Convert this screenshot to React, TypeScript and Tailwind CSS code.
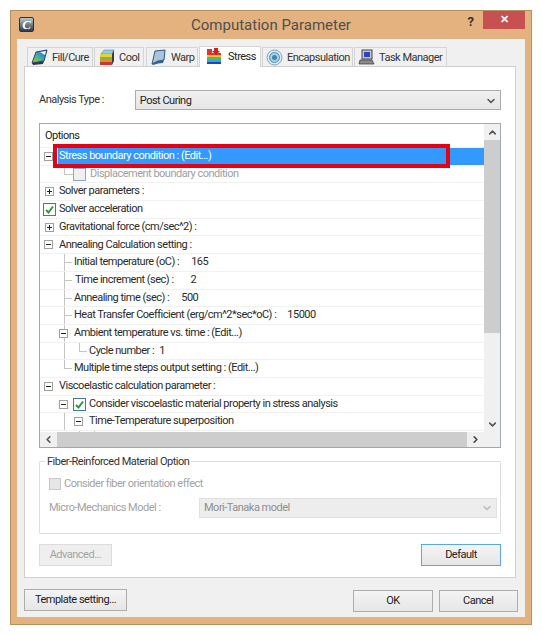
import React from "react"
import { ChevronDown, ChevronLeft, ChevronRight, ChevronUp } from "lucide-react"

const FONT = "font-['Roboto','Liberation_Sans',sans-serif]"

const FillIcon = () => (
  <svg width="17" height="17" viewBox="0 0 17 17" className="shrink-0">
    <defs>
      <linearGradient id="fill" x1="0" y1="1" x2="1" y2="0">
        <stop offset="0" stopColor="#e8a030" />
        <stop offset="0.3" stopColor="#60c060" />
        <stop offset="0.65" stopColor="#2f8fd8" />
        <stop offset="1" stopColor="#1f4fa8" />
      </linearGradient>
    </defs>
    <path d="M1 14 L5 3 L16 1 L13 12 Z" fill="url(#fill)" stroke="#24466e" />
    <path d="M9 3 L15 2 L14 6 Z" fill="#f4f8fb" />
    <path d="M1 14 L13 12 L12 15 L2 16 Z" fill="#2b3a4d" />
  </svg>
)

const CoolIcon = () => (
  <svg width="17" height="17" viewBox="0 0 17 17" className="shrink-0">
    <path d="M3 5 L6 1 L16 1 L14 5 Z" fill="#8fd0e8" stroke="#4b7a96" strokeWidth="0.5" />
    <rect x="2" y="5" width="12" height="3" fill="#e8d03a" />
    <rect x="2" y="8" width="12" height="3" fill="#7ab84a" />
    <rect x="2" y="11" width="12" height="2" fill="#e8892e" />
    <rect x="2" y="13" width="12" height="3" fill="#c9382a" />
    <path d="M14 5 L16 1 L16 12 L14 16 Z" fill="#3d3d3d" />
  </svg>
)

const WarpIcon = () => (
  <svg width="17" height="17" viewBox="0 0 17 17" className="shrink-0">
    <path d="M5 2 L15 1 L14 11 Q8 11 2 15 Z" fill="#a9c4de" stroke="#34597f" />
    <path d="M2 15 Q8 11 14 11 L13 14 Q8 14 3 16 Z" fill="#35608c" />
  </svg>
)

const StressIcon = () => (
  <svg width="17" height="17" viewBox="0 0 17 17" className="shrink-0">
    <rect x="1" y="1" width="5" height="4" fill="#e8302a" />
    <rect x="1" y="5" width="14" height="2" fill="#e8302a" />
    <rect x="1" y="7" width="14" height="2" fill="#f2c230" />
    <rect x="1" y="9" width="14" height="3" fill="#4ec04a" />
    <rect x="1" y="12" width="14" height="2" fill="#3aa0e8" />
    <rect x="1" y="14" width="14" height="2" fill="#2a3fc0" />
    <path d="M8 0 L12 0 L12 3 L14 3 L10 7 L6 3 L8 3 Z" fill="#d3201c" />
  </svg>
)

const EncapIcon = () => (
  <svg width="17" height="17" viewBox="0 0 17 17" className="shrink-0">
    <circle cx="8.5" cy="8.5" r="7.5" fill="#dcebf3" stroke="#7da8bf" />
    <circle cx="8.5" cy="8.5" r="5" fill="#a6d0e4" stroke="#5a8fab" />
    <circle cx="8.5" cy="8.5" r="2.5" fill="#3f86b4" />
  </svg>
)

const TaskIcon = () => (
  <svg width="17" height="17" viewBox="0 0 17 17" className="shrink-0">
    <rect x="4" y="1" width="10" height="9" fill="#c8c8c8" stroke="#444" />
    <rect x="6" y="3" width="6" height="5" fill="#2a43c8" />
    <path d="M2 11 L14 11 L16 15 L1 15 Z" fill="#8a8a8a" stroke="#333" strokeWidth="0.7" />
  </svg>
)

const AppIcon = () => (
  <div className="w-[15px] h-[15px] rounded-[2px] bg-gradient-to-b from-[#b9c6cf] to-[#2f3f4b] border border-[#26333d] flex items-center justify-center text-[13px] leading-none font-bold italic text-white font-['Liberation_Serif',serif]">
    C
  </div>
)

const Tab: React.FC<{ icon: React.ReactNode; label: string; className: string; active?: boolean }> = ({ icon, label, className, active }) => (
  <div
    className={
      active
        ? `${className} h-[21px] -mb-px z-10 bg-white border border-b-0 border-[#d5d5d5] flex items-center gap-[5px] pl-[6px] pb-[2px] text-[#222]`
        : `${className} h-[19px] bg-[#f0f0f0] border border-b-0 border-[#d5d5d5] flex items-center gap-[4px] pl-[3px] text-[#333]`
    }
  >
    {icon}
    <span className="whitespace-nowrap pt-[2px]">{label}</span>
  </div>
)

const TreeBox: React.FC<{ open?: boolean; className: string }> = ({ open, className }) => (
  <div className={`${className} absolute top-[4px] w-[9px] h-[9px] bg-white border border-[#a0a0a0] flex items-center justify-center`}>
    <div className="relative w-[5px] h-px bg-[#222]">
      {!open && <div className="absolute left-[2px] top-[-2px] w-px h-[5px] bg-[#222]" />}
    </div>
  </div>
)

const Check: React.FC<{ checked?: boolean; className: string; muted?: boolean }> = ({ checked, className, muted }) => (
  <div
    className={`${className} absolute top-[2px] w-[13px] h-[13px] border flex items-center justify-center ${
      muted ? "border-[#8fa6c0] bg-[#f0f0f0]" : "border-[#3d7aa8] bg-white"
    }`}
  >
    {checked && (
      <svg width="11" height="11" viewBox="0 0 11 11">
        <path d="M2 6 L4.5 8.5 L9 2.5" fill="none" stroke="#2f9a3a" strokeWidth="2" />
      </svg>
    )}
  </div>
)

const Row: React.FC<{ className: string; muted?: boolean; value?: string; valueClass?: string; label: string; children?: React.ReactNode }> = ({
  className,
  muted,
  value,
  valueClass,
  label,
  children,
}) => (
  <div className={`${className} relative h-[17.7px] shrink-0 flex items-center border-b border-[#f2f2f2] whitespace-nowrap ${muted ? "text-[#a0a0a0]" : "text-[#2a2a2a]"}`}>
    {children}
    <span>{label}</span>
    {value && <span className={valueClass}>{value}</span>}
  </div>
)

const VLine: React.FC<{ className: string }> = ({ className }) => <div className={`${className} absolute w-px bg-[#c4c4c4]`} />
const HLine: React.FC<{ className: string }> = ({ className }) => <div className={`${className} absolute top-[8px] h-px bg-[#c4c4c4]`} />

const Button: React.FC<{ label: string; className: string; disabled?: boolean; focused?: boolean }> = ({ label, className, disabled, focused }) => (
  <div
    className={`${className} h-[22px] flex items-center justify-center border pt-px ${
      disabled
        ? "border-[#dcdcdc] bg-[#efefef] text-[#a3a3a3]"
        : focused
          ? "border-[#5ba7e6] bg-gradient-to-b from-[#f4f4f4] to-[#e6e6e6] text-[#222]"
          : "border-[#adadad] bg-gradient-to-b from-[#f4f4f4] to-[#e6e6e6] text-[#222]"
    }`}
  >
    {label}
  </div>
)

export default function App() {
  return (
    <div className={`${FONT} w-[542px] h-[634px] bg-white pt-[10px] pl-[10px] text-[11px] tracking-[-0.5px] overflow-hidden`}>
      <div className="w-[522px] h-[615px] bg-[#e3b27f] border border-[#b8915f] flex flex-col">
        {/* title bar */}
        <div className="relative h-[28px] shrink-0 flex items-center justify-center text-[15px] tracking-normal text-[#4f4f4f]">
          <div className="absolute left-[8px] top-[6px]">
            <AppIcon />
          </div>
          <span>Computation Parameter</span>
          <div className="absolute right-[57px] top-px text-[13px] font-bold text-[#333]">?</div>
          <div className="absolute right-[6px] top-0 w-[42px] h-[18px] bg-[#c75050] flex items-center justify-center text-white text-[11px] font-bold">✕</div>
        </div>

        {/* dialog body */}
        <div className="mx-[6px] w-[508px] h-[578px] bg-[#f0f0f0] px-[7px] pt-[5px] flex flex-col border-t border-[#f7f7f7]">
          <div className="flex items-end h-[21px] pl-[3px] gap-px">
            <Tab icon={<FillIcon />} label="Fill/Cure" className="w-[66px]" />
            <Tab icon={<CoolIcon />} label="Cool" className="w-[50px]" />
            <Tab icon={<WarpIcon />} label="Warp" className="w-[52px] ml-px" />
            <Tab icon={<StressIcon />} label="Stress" active className="w-[62px]" />
            <Tab icon={<EncapIcon />} label="Encapsulation" className="w-[91px]" />
            <Tab icon={<TaskIcon />} label="Task Manager" className="w-[93px]" />
          </div>

          {/* tab page */}
          <div className="w-[492px] h-[512px] bg-white border border-[#d0d0d0] px-[14px] flex flex-col">
            <div className="flex items-center mt-[23px] h-[20px]">
              <span className="w-[96px] text-[#333]">Analysis Type :</span>
              <div className="w-[367px] h-[20px] border border-[#acacac] bg-gradient-to-b from-[#f0f0f0] to-[#e6e6e6] flex items-center justify-between pl-[4px] pr-[3px] pt-[2px] text-[#222]">
                <span>Post Curing</span>
                <ChevronDown size={12} strokeWidth={3} className="text-[#555]" />
              </div>
            </div>

            {/* options tree */}
            <div className="relative mt-[13px] w-[462px] h-[325px] border border-[#9fa8b0] bg-white flex flex-col shrink-0">
              <div className="flex h-[308px]">
                <div className="w-[444px] overflow-hidden flex flex-col">
                  <div className="h-[24px] shrink-0 flex items-center pl-[5px] pt-[1px] text-[#222] border-b border-[#f2f2f2]">Options</div>
                  <Row className="pl-[19px]" label="">
                    <TreeBox open className="left-[4px]" />
                    <div className="absolute left-[18px] right-0 top-0 bottom-0 bg-[#3399ff] text-white flex items-center pl-[1px]">Stress boundary condition : (Edit...)</div>
                  </Row>
                  <Row className="pl-[50px]" muted label="Displacement boundary condition">
                    <VLine className="left-[24px] top-0 h-[9px]" />
                    <HLine className="left-[24px] w-[9px]" />
                    <Check muted className="left-[33px]" />
                  </Row>
                  <Row className="pl-[19px]" label="Solver parameters :">
                    <TreeBox className="left-[5px]" />
                  </Row>
                  <Row className="pl-[19px]" label="Solver acceleration">
                    <Check checked className="left-[3px]" />
                  </Row>
                  <Row className="pl-[19px]" label="Gravitational force (cm/sec^2) :">
                    <TreeBox className="left-[5px]" />
                  </Row>
                  <Row className="pl-[19px]" label="Annealing Calculation setting :">
                    <TreeBox open className="left-[4px]" />
                  </Row>
                  <Row className="pl-[34px]" label="Initial temperature (oC) :" value="165" valueClass="ml-[12px]">
                    <VLine className="left-[24px] top-0 h-full" />
                    <HLine className="left-[24px] w-[8px]" />
                  </Row>
                  <Row className="pl-[35px]" label="Time increment (sec) :" value="2" valueClass="ml-[17px]">
                    <VLine className="left-[24px] top-0 h-full" />
                    <HLine className="left-[24px] w-[8px]" />
                  </Row>
                  <Row className="pl-[34px]" label="Annealing time (sec) :" value="500" valueClass="ml-[12px]">
                    <VLine className="left-[24px] top-0 h-full" />
                    <HLine className="left-[24px] w-[8px]" />
                  </Row>
                  <Row className="pl-[34px]" label="Heat Transfer Coefficient (erg/cm^2*sec*oC) :" value="15000" valueClass="ml-[11px]">
                    <VLine className="left-[24px] top-0 h-full" />
                    <HLine className="left-[24px] w-[8px]" />
                  </Row>
                  <Row className="pl-[34px]" label="Ambient temperature vs. time : (Edit...)">
                    <VLine className="left-[24px] top-0 h-full" />
                    <TreeBox open className="left-[19px]" />
                  </Row>
                  <Row className="pl-[49px]" label="Cycle number :" value="1" valueClass="ml-[5px]">
                    <VLine className="left-[24px] top-0 h-full" />
                    <VLine className="left-[39px] top-0 h-[9px]" />
                    <HLine className="left-[39px] w-[8px]" />
                  </Row>
                  <Row className="pl-[34px]" label="Multiple time steps output setting : (Edit...)">
                    <VLine className="left-[24px] top-0 h-[9px]" />
                    <HLine className="left-[24px] w-[8px]" />
                  </Row>
                  <Row className="pl-[19px]" label="Viscoelastic calculation parameter :">
                    <TreeBox open className="left-[4px]" />
                  </Row>
                  <Row className="pl-[49px]" label="Consider viscoelastic material property in stress analysis">
                    <TreeBox open className="left-[19px]" />
                    <Check checked className="left-[33px]" />
                  </Row>
                  <Row className="pl-[49px]" label="Time-Temperature superposition">
                    <VLine className="left-[24px] top-0 h-full" />
                    <TreeBox open className="left-[34px]" />
                  </Row>
                  <div className="relative flex-1">
                    <VLine className="left-[39px] top-0 h-full" />
                    <VLine className="left-[54px] top-0 h-[2px]" />
                  </div>
                </div>
                <div className="w-[16px] bg-[#f0f0f0] flex flex-col items-center">
                  <div className="h-[16px] shrink-0 flex items-center justify-center">
                    <ChevronUp size={11} strokeWidth={3.5} className="text-[#555]" />
                  </div>
                  <div className="w-full h-[193px] bg-[#cdcdcd]" />
                  <div className="flex-1" />
                  <div className="h-[16px] shrink-0 flex items-center justify-center">
                    <ChevronDown size={11} strokeWidth={3.5} className="text-[#555]" />
                  </div>
                </div>
              </div>
              <div className="flex-1 bg-[#f0f0f0] flex items-center">
                <div className="w-[17px] flex justify-center">
                  <ChevronLeft size={11} strokeWidth={3.5} className="text-[#555]" />
                </div>
                <div className="w-[410px] h-full bg-[#cdcdcd]" />
                <div className="w-[17px] flex justify-center">
                  <ChevronRight size={11} strokeWidth={3.5} className="text-[#444]" />
                </div>
              </div>

              {/* red annotation drawn over the dialog */}
              <div className="absolute left-[13px] top-[20px] w-[397px] h-[24px] border-[4px] border-[#e60012]" />
            </div>

            {/* fiber group */}
            <div className="relative mt-[13px] w-[462px] h-[73px] border border-[#dedede] rounded-[1px]">
              <span className="absolute left-[5px] top-[-8px] bg-white px-[2px] text-[#333]">Fiber-Reinforced Material Option</span>
              <div className="flex items-center gap-[3px] h-[13px] mt-[15px] ml-[9px] text-[#a3a3a3]">
                <div className="w-[12px] h-[12px] bg-[#e6e6e6] border border-[#c8c8c8]" />
                <span className="pt-[2px]">Consider fiber orientation effect</span>
              </div>
              <div className="flex items-center mt-[8px] ml-[9px] text-[#a3a3a3]">
                <span className="w-[150px]">Micro-Mechanics Model :</span>
                <div className="w-[298px] h-[20px] bg-[#ededed] border border-[#e0e0e0] flex items-center justify-between pl-[4px] pr-[3px] text-[#8f8f8f]">
                  <span>Mori-Tanaka model</span>
                  <ChevronDown size={12} strokeWidth={3} className="text-[#bbb]" />
                </div>
              </div>
            </div>

            <div className="flex justify-between mt-[10px] w-[462px]">
              <Button label="Advanced..." disabled className="w-[73px]" />
              <Button label="Default" focused className="w-[80px]" />
            </div>
          </div>

          {/* footer */}
          <div className="flex items-start mt-[11px]">
            <Button label="Template setting..." className="w-[104px]" />
            <Button label="OK" className="w-[80px] ml-[226px] mt-px" />
            <Button label="Cancel" className="w-[80px] ml-[6px] mt-px" />
          </div>
        </div>
      </div>
    </div>
  )
}
